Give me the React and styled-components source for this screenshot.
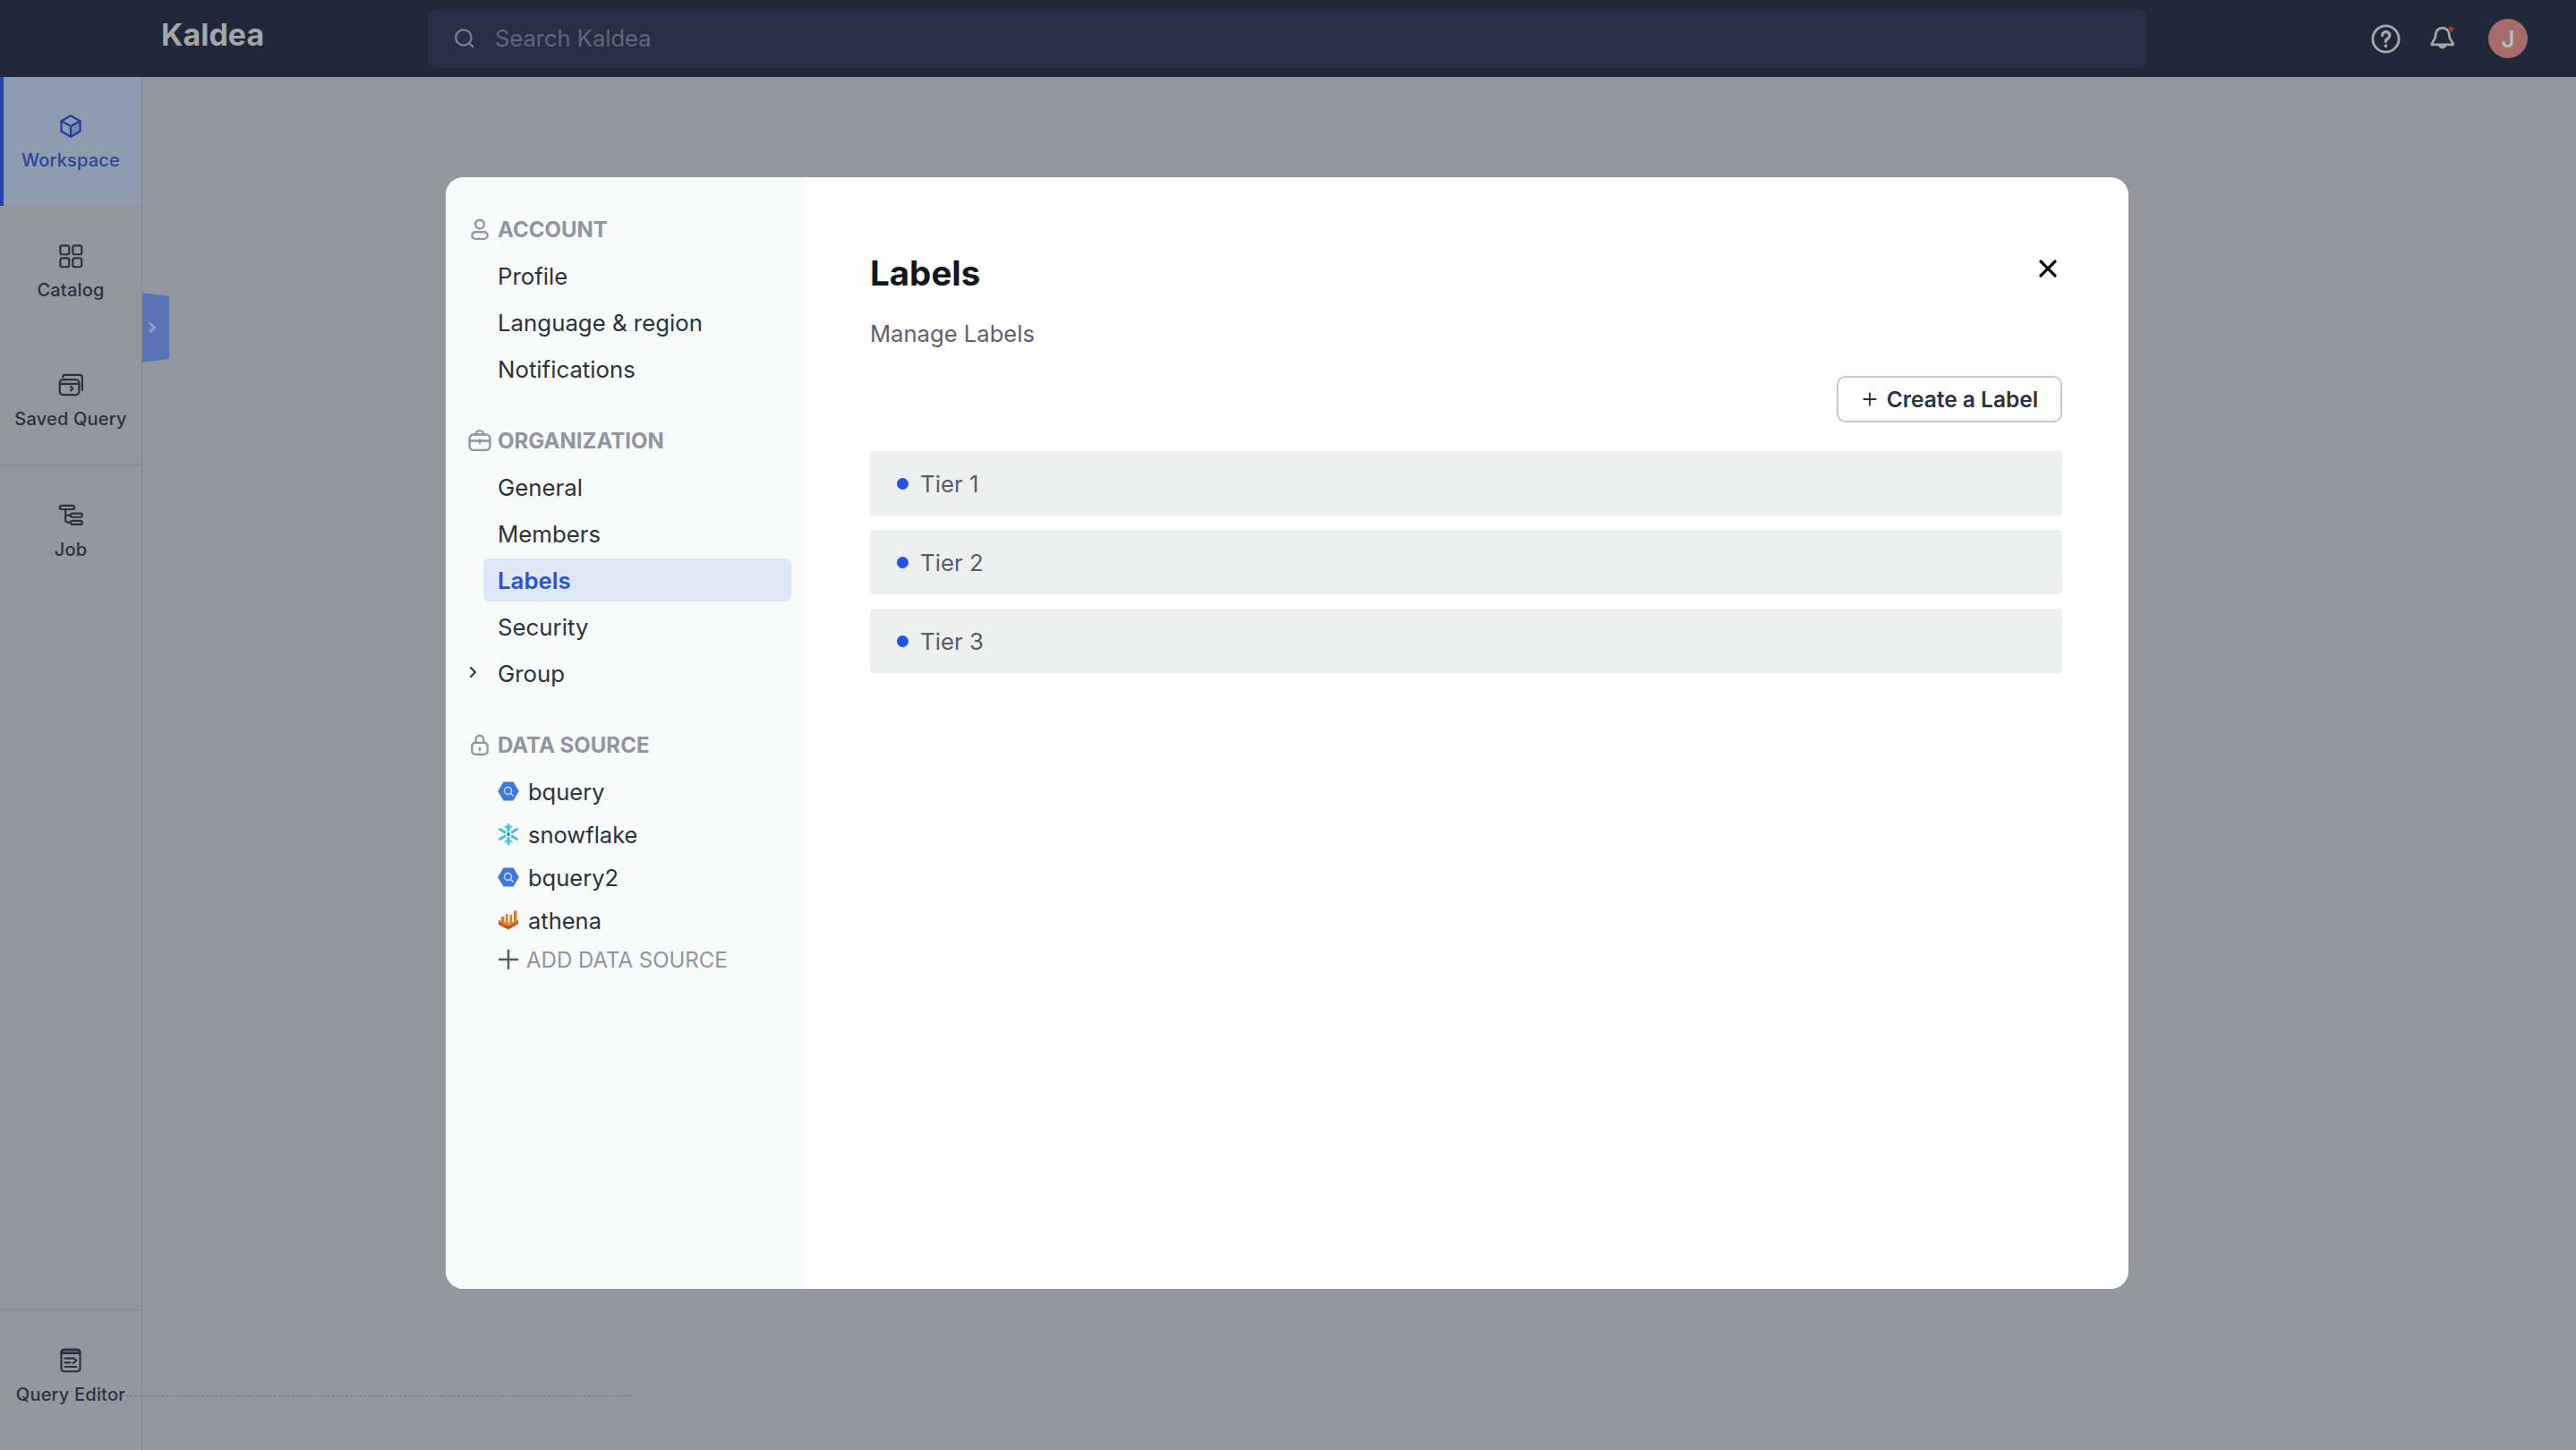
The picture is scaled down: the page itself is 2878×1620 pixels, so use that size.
import React from "react";
import styled, { createGlobalStyle } from "styled-components";

const Global = createGlobalStyle`
  html, body { margin: 0; padding: 0; background: #94989e; }
  * { box-sizing: border-box; }
  body { font-family: Inter, "Liberation Sans", sans-serif; }
`;

const Page = styled.div`
  position: relative;
  width: 2878px;
  height: 1620px;
  overflow: hidden;
  display: flex;
  flex-direction: column;
  background: #94989e;
`;

const Header = styled.header`
  height: 86px;
  flex: none;
  display: flex;
  align-items: center;
  background: #1f2739;
  padding: 0 54px 0 180px;
`;

const Logo = styled.div`
  width: 298px;
  font-size: 34px;
  font-weight: 700;
  letter-spacing: 0;
  color: #a3a6ab;
  margin-top: -9px;
`;

const Search = styled.div`
  width: 1920px;
  height: 66px;
  flex: none;
  border-radius: 10px;
  background: #272e46;
  display: flex;
  align-items: center;
  gap: 21px;
  padding-left: 28px;
  padding-bottom: 1px;
  color: #616877;
  font-size: 25.5px;
`;

const HeaderIcons = styled.div`
  margin-left: auto;
  display: flex;
  align-items: center;
  gap: 32px;
`;

const Avatar = styled.div`
  width: 44px;
  height: 44px;
  border-radius: 50%;
  background: #a66c6c;
  color: #b9bcb9;
  display: flex;
  align-items: center;
  justify-content: center;
  font-size: 26px;
  font-weight: 600;
  margin-left: 3px;
`;

const Body = styled.div`
  flex: 1;
  display: flex;
  min-height: 0;
`;

const Side = styled.nav`
  width: 159px;
  flex: none;
  display: flex;
  flex-direction: column;
  border-right: 1px solid #838a96;
`;

const NavItem = styled.div`
  height: ${(p) => p.$h || 144}px;
  padding-top: ${(p) => p.$pt || 42}px;
  display: flex;
  flex-direction: column;
  align-items: center;
  gap: 12px;
  font-size: 20px;
  letter-spacing: 0.2px;
  font-weight: 500;
  color: ${(p) => (p.$active ? "#2b4595" : "#2a3142")};
  background: ${(p) => (p.$active ? "#8f9bb0" : "transparent")};
  box-shadow: ${(p) => (p.$active ? "inset 4px 0 0 #1f46b4" : "none")};
  border-top: ${(p) => (p.$line ? "1px solid #838a96" : "none")};
  svg { display: block; }
`;

const NavSpacer = styled.div`
  flex: 1;
`;

const Tab = styled.div`
  position: absolute;
  left: 159px;
  top: 327px;
  width: 30px;
  height: 78px;
  background: #5a72b6;
  clip-path: polygon(0 0, 100% 4px, 100% 74px, 0 100%);
  border-radius: 0 4px 4px 0;
  display: flex;
  align-items: center;
  padding-left: 5px;
`;

const DashLine = styled.div`
  position: absolute;
  left: 105px;
  top: 1559px;
  width: 600px;
  border-top: 1px dashed #72767e;
`;

const Overlay = styled.div`
  position: absolute;
  left: 498px;
  top: 198px;
  width: 1880px;
  height: 1242px;
`;

const Modal = styled.div`
  width: 100%;
  height: 100%;
  display: flex;
  background: #fefefe;
  border-radius: 20px;
  overflow: hidden;
`;

const Panel = styled.aside`
  width: 400px;
  flex: none;
  background: #f9fafa;
  padding: 38px 14px 0 42px;
`;

const Section = styled.div`
  margin-bottom: 36px;
`;

const SectionHead = styled.div`
  height: 40px;
  margin-bottom: 8px;
  display: flex;
  align-items: center;
  gap: 7px;
  margin-left: -17px;
  font-size: 24px;
  font-weight: 700;
  color: #9095a3;
  svg { flex: none; }
`;

const MenuItem = styled.div`
  position: relative;
  height: 48px;
  margin: 0 0 4px 0;
  padding-left: 16px;
  display: flex;
  align-items: center;
  border-radius: 6px;
  font-size: 25.8px;
  font-weight: ${(p) => (p.$active ? 600 : 400)};
  color: ${(p) => (p.$active ? "#2453e0" : "#2a333d")};
  background: ${(p) => (p.$active ? "#dfe8f6" : "transparent")};
`;

const Caret = styled.svg`
  position: absolute;
  left: -18px;
  top: 15px;
`;

const SourceRow = styled.div`
  height: 48px;
  padding-left: 16px;
  display: flex;
  align-items: center;
  gap: 10px;
  font-size: 25.5px;
  color: #2a333d;
  svg { flex: none; }
`;

const AddRow = styled.div`
  height: 40px;
  padding-left: 16px;
  display: flex;
  align-items: center;
  gap: 8px;
  font-size: 24px;
  color: #8e94a2;
`;

const Content = styled.main`
  position: relative;
  flex: 1;
  padding: 0 74px 0 74px;
`;

const Title = styled.h1`
  margin: 0;
  padding-top: 83px;
  height: 149px;
  font-size: 38.500px;
  line-height: 48px;
  font-weight: 700;
  color: #11161f;
`;

const Sub = styled.p`
  margin: 0;
  height: 73px;
  font-size: 25.6px;
  line-height: 52px;
  color: #5b6270;
`;

const Actions = styled.div`
  display: flex;
  justify-content: flex-end;
  margin-bottom: 32px;
`;

const Button = styled.button`
  width: 252px;
  height: 52px;
  display: flex;
  align-items: center;
  justify-content: center;
  gap: 11px;
  padding: 0 0 0 2px;
  border: 2px solid #c5c9d2;
  border-radius: 10px;
  background: #fefefe;
  font-family: inherit;
  font-size: 24.500px;
  font-weight: 600;
  color: #2a3442;
`;

const Close = styled.svg`
  position: absolute;
  right: 78px;
  top: 90px;
`;

const LabelList = styled.div`
  display: flex;
  flex-direction: column;
  gap: 16px;
`;

const LabelRow = styled.div`
  height: 72px;
  display: flex;
  align-items: center;
  gap: 13px;
  padding-left: 30px;
  background: #eeefef;
  border-radius: 4px;
  font-size: 25.8px;
  color: #565d6b;
`;

const Dot = styled.span`
  width: 13px;
  height: 13px;
  border-radius: 50%;
  background: #2453e8;
`;

const Ico = ({ s = 28, c = "#2a3142", w = 1.9, children }) => (
  <svg width={s} height={s} viewBox="0 0 24 24" fill="none" stroke={c} strokeWidth={w} strokeLinecap="round" strokeLinejoin="round">
    {children}
  </svg>
);

const BQuery = () => (
  <svg width="24" height="24" viewBox="0 0 24 24">
    <path d="M6.500 1.500h11L23.800 12l-6.300 10.500h-11L.2 12z" fill="#3f76dc" />
    <circle cx="11.500" cy="11.500" r="4" fill="none" stroke="#cfe0fb" strokeWidth="1.400" />
    <path d="M14.500 14.500l3 3" stroke="#cfe0fb" strokeWidth="1.400" />
  </svg>
);

const Snow = () => (
  <svg width="24" height="24" viewBox="0 0 24 24" fill="none" stroke="#3fbfe6" strokeWidth="3" strokeLinecap="round">
    <path d="M12 1.500v6.500M12 16v6.500M2.500 6.500l5.500 3.200M16 14.300l5.500 3.200M2.500 17.500l5.500-3.200M16 9.700l5.500-3.200" />
    <path d="M8.500 3.500L12 6l3.500-2.500M8.500 20.500L12 18l3.500 2.500" strokeWidth="1.800" />
    <circle cx="12" cy="12" r="2" fill="#2b8fc7" stroke="none" />
  </svg>
);

const Athena = () => (
  <svg width="24" height="24" viewBox="0 0 24 24">
    <path d="M1 12l11 4 11-4v4l-11 6.500L1 17z" fill="#b8551c" />
    <path d="M1 12l11 3.500L23 12l-1 2.500-10 4.500-10-4.500z" fill="#e8842a" />
    <path d="M4 8h3.500v7H4zM9 5h2.500v11H9zM13.500 6H16v9.500h-2.500zM18 1.500h3.500V14H18z" fill="#e07a24" />
  </svg>
);

const labels = ["Tier 1", "Tier 2", "Tier 3"];

export default function App() {
  return (
    <Page>
      <Global />
      <Header>
        <Logo>Kaldea</Logo>
        <Search>
          <Ico s={26} c="#7d8492" w={2}>
            <circle cx="11" cy="11" r="8" />
            <path d="M17 17l3.500 3.500" />
          </Ico>
          Search Kaldea
        </Search>
        <HeaderIcons>
          <Ico s={35} c="#a4a7aa" w={2}>
            <circle cx="12" cy="12" r="10" />
            <path d="M9.300 9.300a2.800 2.800 0 1 1 4.300 2.400c-1 .6-1.600 1.100-1.600 2.200" strokeWidth="2.300" />
            <path d="M12 17.200v.1" strokeWidth="2.600" />
          </Ico>
          <svg width="30" height="30" viewBox="0 0 24 24" fill="none" stroke="#a4a9a8" strokeWidth="2.200" strokeLinecap="round" strokeLinejoin="round">
            <path d="M11 2.500a6 6 0 0 0-6 6c0 5-3.500 6-3.500 9h19c0-3-3.500-4-3.500-9a6 6 0 0 0-6-6z" />
            <path d="M8.500 18a2.600 2.600 0 0 0 5 0" />
            <circle cx="18.500" cy="3.500" r="2.400" fill="#a03c3c" stroke="none" />
          </svg>
          <Avatar>J</Avatar>
        </HeaderIcons>
      </Header>
      <Body>
        <Side>
          <NavItem $active $pt={41}>
            <Ico c="#1f3f9a">
              <path d="M12 2l9 5v10l-9 5-9-5V7z" />
              <path d="M3 7l9 5 9-5M12 12v10" />
              <path d="M12 12l9-5v10l-9 5z" fill="#1f3f9a" fillOpacity=".2" stroke="none" />
            </Ico>
            Workspace
          </NavItem>
          <NavItem>
            <Ico>
              <rect x="2" y="2" width="8.500" height="8.500" rx="2" />
              <rect x="14" y="2" width="8.500" height="8.500" rx="2" />
              <rect x="2" y="14" width="8.500" height="8.500" rx="2" />
              <rect x="14" y="14" width="8.500" height="8.500" rx="2" />
            </Ico>
            Catalog
          </NavItem>
          <NavItem $h={145}>
            <Ico>
              <rect x="1.500" y="7" width="18.500" height="14.500" rx="3" />
              <path d="M1.500 11h18.500M4.500 4.500a2 2 0 0 1 2-2h14a2.500 2.500 0 0 1 2.500 2.500v12" />
              <path d="M12 13.500l2 2-2 2" />
            </Ico>
            Saved Query
          </NavItem>
          <NavItem $line $h={145}>
            <Ico>
              <rect x="1.500" y="2.500" width="14" height="3.500" rx="1.700" />
              <rect x="12" y="10" width="11" height="3.500" rx="1.700" />
              <rect x="12" y="17" width="11" height="3.500" rx="1.700" />
              <path d="M7 6v10a2.500 2.500 0 0 0 2.500 2.500H12M7 11.700h5" />
            </Ico>
            Job
          </NavItem>
          <NavSpacer />
          <NavItem $line $h={157} $pt={42}>
            <Ico>
              <rect x="3" y="1.500" width="18" height="21" rx="3" />
              <path d="M3 5h18v-1a2.500 2.500 0 0 0-2.500-2.500h-13A2.500 2.500 0 0 0 3 4z" fill="#2a3142" fillOpacity=".5" />
              <path d="M6.500 10h7M6.500 14h5M6.500 18h11M14.500 9.500l3 2.500-3 2.500" />
            </Ico>
            Query Editor
          </NavItem>
        </Side>
      </Body>
      <Tab>
        <svg width="14" height="18" viewBox="0 0 14 18" fill="none" stroke="#8e9ccb" strokeWidth="3" strokeLinecap="round" strokeLinejoin="round">
          <path d="M4 4.500l4.500 4.500-4.500 4.500" />
        </svg>
      </Tab>
      <DashLine />
      <Overlay>
        <Modal>
          <Panel>
            <Section>
              <SectionHead>
                <Ico s={26} c="#9095a3" w={2.200}>
                  <circle cx="12" cy="7" r="4.500" />
                  <rect x="4" y="15" width="16" height="7" rx="3.500" />
                </Ico>
                ACCOUNT
              </SectionHead>
              <MenuItem>Profile</MenuItem>
              <MenuItem>Language &amp; region</MenuItem>
              <MenuItem>Notifications</MenuItem>
            </Section>
            <Section>
              <SectionHead>
                <Ico s={26} c="#9095a3" w={2.200}>
                  <rect x="1.500" y="6" width="21" height="16" rx="4" />
                  <path d="M8 6a4 4 0 0 1 8 0M1.500 12.500h21M12 11.500v3" />
                </Ico>
                ORGANIZATION
              </SectionHead>
              <MenuItem>General</MenuItem>
              <MenuItem>Members</MenuItem>
              <MenuItem $active>Labels</MenuItem>
              <MenuItem>Security</MenuItem>
              <MenuItem>
                <Caret width="14" height="16" viewBox="0 0 14 16" fill="none" stroke="#2a333d" strokeWidth="2" strokeLinecap="round" strokeLinejoin="round">
                  <path d="M4 3l5 5-5 5" />
                </Caret>
                Group
              </MenuItem>
            </Section>
            <Section>
              <SectionHead>
                <Ico s={26} c="#9095a3" w={2.200}>
                  <rect x="4" y="10" width="16" height="12" rx="3.500" />
                  <path d="M8 10V6.500a4 4 0 0 1 8 0V10M12 15.500v2" />
                </Ico>
                DATA SOURCE
              </SectionHead>
              <SourceRow>
                <BQuery />
                bquery
              </SourceRow>
              <SourceRow>
                <Snow />
                snowflake
              </SourceRow>
              <SourceRow>
                <BQuery />
                bquery2
              </SourceRow>
              <SourceRow>
                <Athena />
                athena
              </SourceRow>
              <AddRow>
                <Ico s={24} c="#555c69" w={2.400}>
                  <path d="M12 2v20M2 12h20" />
                </Ico>
                ADD DATA SOURCE
              </AddRow>
            </Section>
          </Panel>
          <Content>
            <Title>Labels</Title>
            <Close width="24" height="24" viewBox="0 0 24 24" fill="none" stroke="#0d0d0d" strokeWidth="3.200" strokeLinecap="round">
              <path d="M4 4l16 16M20 4L4 20" />
            </Close>
            <Sub>Manage Labels</Sub>
            <Actions>
              <Button>
                <Ico s={16} c="#2a3442" w={2.800}>
                  <path d="M12 2v20M2 12h20" />
                </Ico>
                Create a Label
              </Button>
            </Actions>
            <LabelList>
              {labels.map((l) => (
                <LabelRow key={l}>
                  <Dot />
                  {l}
                </LabelRow>
              ))}
            </LabelList>
          </Content>
        </Modal>
      </Overlay>
    </Page>
  );
}
